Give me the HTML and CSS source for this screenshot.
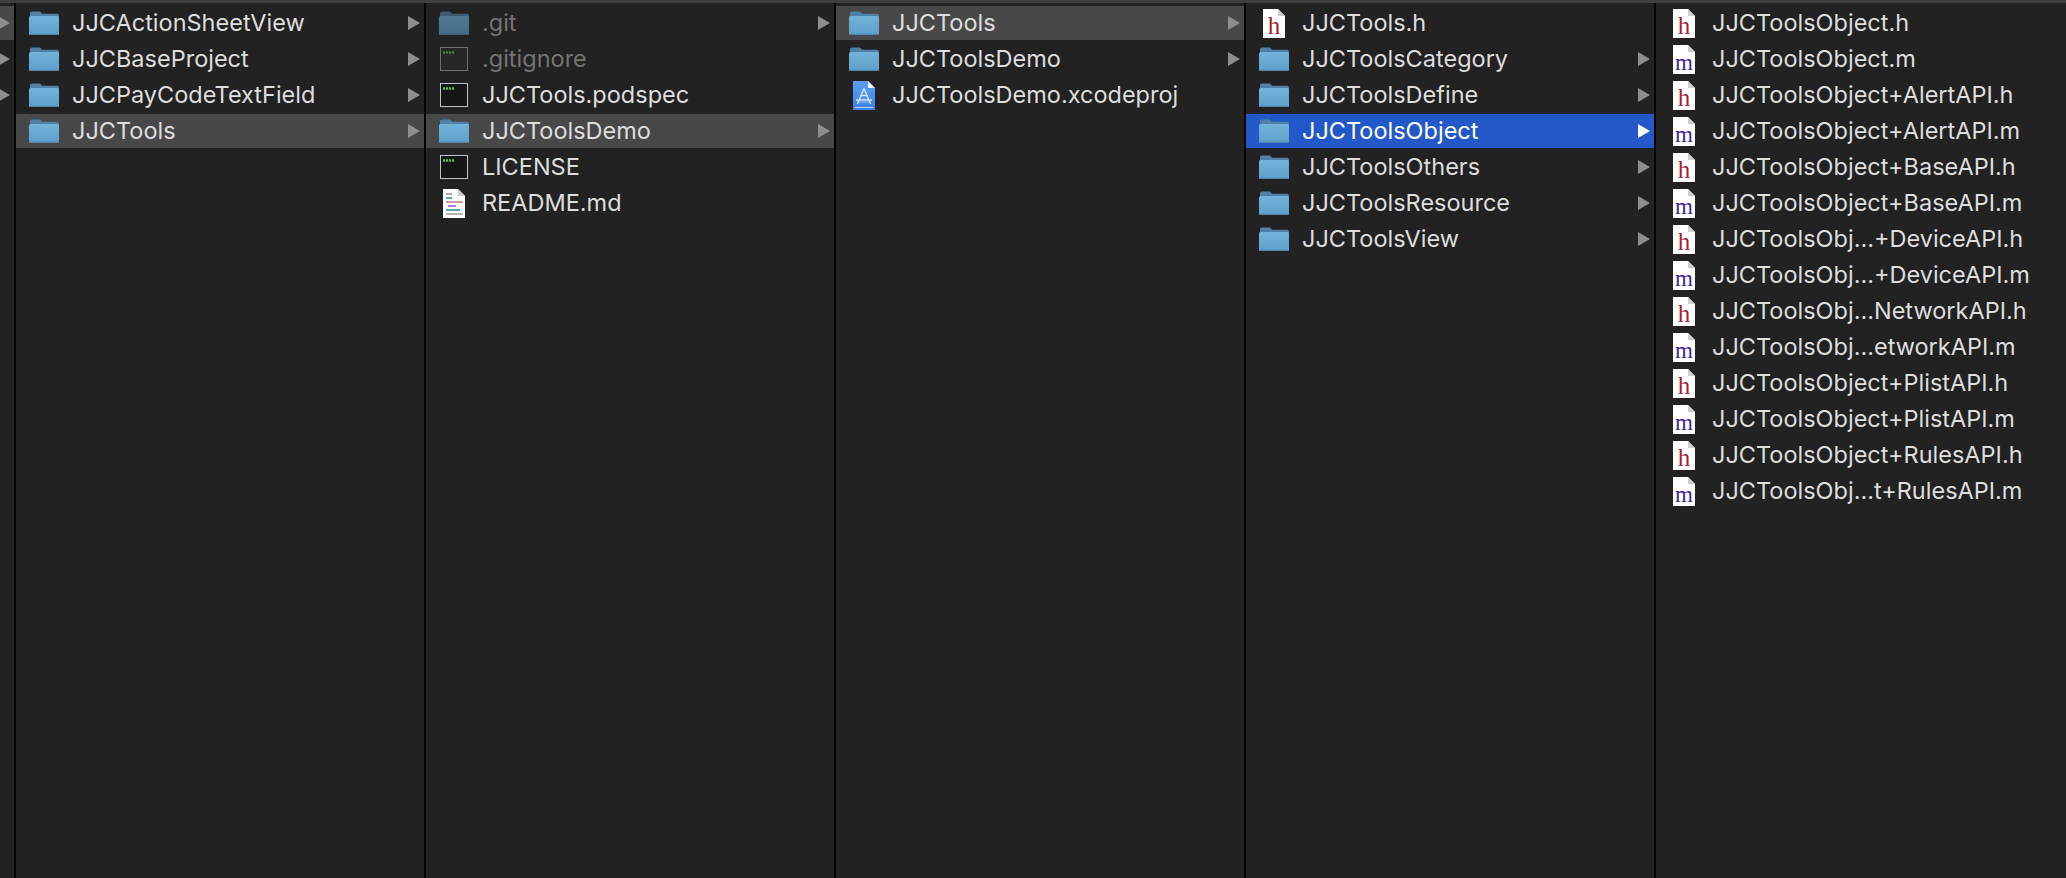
FILE: index.html
```html
<!DOCTYPE html>
<html lang="en">
<head>
  <meta charset="UTF-8" />
  <title>JJCTools</title>
  <link rel="stylesheet" href="styles.css">
</head>
<body>

  <svg class="sprites" width="0" height="0">
    <defs>
      <linearGradient id="folderFront" x1="0" y1="0" x2="0" y2="1">
        <stop offset="0" stop-color="#72b3db"/>
        <stop offset="1" stop-color="#5fa0cb"/>
      </linearGradient>
      <linearGradient id="xcodeBlue" x1="0" y1="0" x2="0" y2="1">
        <stop offset="0" stop-color="#5c9ff0"/>
        <stop offset="1" stop-color="#3f80e2"/>
      </linearGradient>
      <symbol id="folder" viewBox="0 0 30 24">
        <path d="M1 9V2.500C1 1.200 1.700.5 3 .5h7c.9 0 1.400.3 2 1l1 1.300h15c1.200 0 2 .8 2 2V10z" fill="#4f81a7"/>
        <rect x="0" y="5" width="30" height="19" rx="1.500" fill="url(#folderFront)"/>
        <rect x="0" y="22.800" width="30" height="1.200" rx=".6" fill="#4f86ad"/>
      </symbol>
      <symbol id="term" viewBox="0 0 28 24">
        <rect x=".5" y=".5" width="27" height="23" fill="#161616" stroke="#b9c3c8"/>
        <path d="M3 5.500h11" stroke="#5cc060" stroke-width="2.500" stroke-dasharray="2 1"/>
      </symbol>
      <symbol id="termdim" viewBox="0 0 28 24">
        <rect x=".5" y=".5" width="27" height="23" fill="#272727" stroke="#6d7172"/>
        <path d="M3 5.500h11" stroke="#47804a" stroke-width="2.500" stroke-dasharray="2 1"/>
      </symbol>
      <symbol id="readme" viewBox="0 0 22 29">
        <path d="M0 0h15l7 7v22H0z" fill="#fff"/>
        <path d="M15 0l7 7h-7z" fill="#c9c9c9"/>
        <path d="M3 5h6" stroke="#a9a9a9" stroke-width="2"/>
        <path d="M3 9h6" stroke="#58a9b5" stroke-width="2"/>
        <path d="M3 13h17" stroke="#cf9aa0" stroke-width="2"/>
        <path d="M5 17h8" stroke="#a07fe8" stroke-width="2"/>
        <path d="M3 21h14" stroke="#58a9b5" stroke-width="2"/>
        <path d="M3 25h17" stroke="#b4b4b4" stroke-width="2"/>
      </symbol>
      <symbol id="xcode" viewBox="0 0 22 29">
        <path d="M0 0h15l7 7v22H0z" fill="url(#xcodeBlue)"/>
        <path d="M15 0l7 7h-7z" fill="#f0f5fc"/>
        <path d="M2 26.500h18" stroke="#b7d3f8" stroke-width="1"/>
        <path d="M11 7.500L4.500 23M11 7.500L17.500 23M3 19h16M7 14.500h8" stroke="#d3e4fb" stroke-width="1.400" fill="none"/>
        <path d="M4 21h14" stroke="#8fbaf3" stroke-width="1"/>
      </symbol>
      <symbol id="hfile" viewBox="0 0 22 29">
        <path d="M0 0h15l7 7v22H0z" fill="#fff"/>
        <path d="M15 0l7 7h-7z" fill="#d0d0d0"/>
        <text x="11" y="25" class="letter letter-h">h</text>
      </symbol>
      <symbol id="mfile" viewBox="0 0 22 29">
        <path d="M0 0h15l7 7v22H0z" fill="#fff"/>
        <path d="M15 0l7 7h-7z" fill="#d0d0d0"/>
        <text x="11" y="25" class="letter letter-m">m</text>
      </symbol>
    </defs>
  </svg>

  <div class="browser">

    <div class="column column-sliver">
      <div class="row row-gray"><i class="arrow"></i></div>
      <div class="row"><i class="arrow"></i></div>
      <div class="row"><i class="arrow"></i></div>
    </div>

    <div class="column">
      <div class="row"><svg class="icon folder"><use href="#folder"/></svg><span class="name">JJCActionSheetView</span><i class="arrow"></i></div>
      <div class="row"><svg class="icon folder"><use href="#folder"/></svg><span class="name">JJCBaseProject</span><i class="arrow"></i></div>
      <div class="row"><svg class="icon folder"><use href="#folder"/></svg><span class="name">JJCPayCodeTextField</span><i class="arrow"></i></div>
      <div class="row row-gray"><svg class="icon folder"><use href="#folder"/></svg><span class="name">JJCTools</span><i class="arrow"></i></div>
    </div>

    <div class="column">
      <div class="row row-hidden"><svg class="icon folder"><use href="#folder"/></svg><span class="name">.git</span><i class="arrow"></i></div>
      <div class="row row-hidden"><svg class="icon term"><use href="#termdim"/></svg><span class="name">.gitignore</span></div>
      <div class="row"><svg class="icon term"><use href="#term"/></svg><span class="name">JJCTools.podspec</span></div>
      <div class="row row-gray"><svg class="icon folder"><use href="#folder"/></svg><span class="name">JJCToolsDemo</span><i class="arrow"></i></div>
      <div class="row"><svg class="icon term"><use href="#term"/></svg><span class="name">LICENSE</span></div>
      <div class="row"><svg class="icon doc"><use href="#readme"/></svg><span class="name">README.md</span></div>
    </div>

    <div class="column">
      <div class="row row-gray"><svg class="icon folder"><use href="#folder"/></svg><span class="name">JJCTools</span><i class="arrow"></i></div>
      <div class="row"><svg class="icon folder"><use href="#folder"/></svg><span class="name">JJCToolsDemo</span><i class="arrow"></i></div>
      <div class="row"><svg class="icon doc"><use href="#xcode"/></svg><span class="name">JJCToolsDemo.xcodeproj</span></div>
    </div>

    <div class="column">
      <div class="row"><svg class="icon doc"><use href="#hfile"/></svg><span class="name">JJCTools.h</span></div>
      <div class="row"><svg class="icon folder"><use href="#folder"/></svg><span class="name">JJCToolsCategory</span><i class="arrow"></i></div>
      <div class="row"><svg class="icon folder"><use href="#folder"/></svg><span class="name">JJCToolsDefine</span><i class="arrow"></i></div>
      <div class="row row-blue"><svg class="icon folder"><use href="#folder"/></svg><span class="name">JJCToolsObject</span><i class="arrow"></i></div>
      <div class="row"><svg class="icon folder"><use href="#folder"/></svg><span class="name">JJCToolsOthers</span><i class="arrow"></i></div>
      <div class="row"><svg class="icon folder"><use href="#folder"/></svg><span class="name">JJCToolsResource</span><i class="arrow"></i></div>
      <div class="row"><svg class="icon folder"><use href="#folder"/></svg><span class="name">JJCToolsView</span><i class="arrow"></i></div>
    </div>

    <div class="column">
      <div class="row"><svg class="icon doc"><use href="#hfile"/></svg><span class="name">JJCToolsObject.h</span></div>
      <div class="row"><svg class="icon doc"><use href="#mfile"/></svg><span class="name">JJCToolsObject.m</span></div>
      <div class="row"><svg class="icon doc"><use href="#hfile"/></svg><span class="name">JJCToolsObject+AlertAPI.h</span></div>
      <div class="row"><svg class="icon doc"><use href="#mfile"/></svg><span class="name">JJCToolsObject+AlertAPI.m</span></div>
      <div class="row"><svg class="icon doc"><use href="#hfile"/></svg><span class="name">JJCToolsObject+BaseAPI.h</span></div>
      <div class="row"><svg class="icon doc"><use href="#mfile"/></svg><span class="name">JJCToolsObject+BaseAPI.m</span></div>
      <div class="row"><svg class="icon doc"><use href="#hfile"/></svg><span class="name">JJCToolsObj...+DeviceAPI.h</span></div>
      <div class="row"><svg class="icon doc"><use href="#mfile"/></svg><span class="name">JJCToolsObj...+DeviceAPI.m</span></div>
      <div class="row"><svg class="icon doc"><use href="#hfile"/></svg><span class="name">JJCToolsObj...NetworkAPI.h</span></div>
      <div class="row"><svg class="icon doc"><use href="#mfile"/></svg><span class="name">JJCToolsObj...etworkAPI.m</span></div>
      <div class="row"><svg class="icon doc"><use href="#hfile"/></svg><span class="name">JJCToolsObject+PlistAPI.h</span></div>
      <div class="row"><svg class="icon doc"><use href="#mfile"/></svg><span class="name">JJCToolsObject+PlistAPI.m</span></div>
      <div class="row"><svg class="icon doc"><use href="#hfile"/></svg><span class="name">JJCToolsObject+RulesAPI.h</span></div>
      <div class="row"><svg class="icon doc"><use href="#mfile"/></svg><span class="name">JJCToolsObj...t+RulesAPI.m</span></div>
    </div>

  </div>

</body>
</html>
```

FILE: styles.css
```css
html, body {
  margin: 0;
  height: 100%;
  overflow: hidden;
}

body {
  background-color: #3e3e3e;
  padding-top: 3px;
  box-sizing: border-box;
  font-family: Inter, "Noto Sans", sans-serif;
  color: #dedede;
}

.sprites {
  display: block;
  height: 0;
}

.browser {
  display: grid;
  grid-template-columns: 14px repeat(4, 408px) 1fr;
  gap: 2px;
  height: 100%;
  background-color: #000;
}

.column {
  display: flex;
  flex-direction: column;
  gap: 2px;
  padding-top: 3px;
  background-color: #222;
  overflow: hidden;
  min-width: 0;
}

.row {
  display: flex;
  align-items: center;
  flex: 0 0 34px;
  height: 34px;
  padding-right: 4px;
}

.row-gray {
  background-color: #484848;
}

.row-blue {
  background-color: #2358c9;
  color: #fff;
}

.row-blue .arrow {
  border-left-color: #fff;
}

.row-hidden {
  color: #747474;
}

.row-hidden .folder {
  opacity: 0.6;
}

.icon {
  flex: none;
}

.folder {
  width: 30px;
  height: 24px;
  margin-left: 13px;
  margin-right: 13px;
}

.term {
  width: 28px;
  height: 24px;
  margin-left: 14px;
  margin-right: 14px;
}

.doc {
  width: 22px;
  height: 29px;
  margin-left: 17px;
  margin-right: 17px;
}

.name {
  flex: 1;
  padding-bottom: 1px;
  font-size: 23.5px;
  white-space: nowrap;
}

.arrow {
  flex: none;
  width: 0;
  height: 0;
  border-left: 12px solid #8e8e8e;
  border-top: 7px solid transparent;
  border-bottom: 7px solid transparent;
}

.column-sliver .row {
  justify-content: flex-end;
  padding-right: 4px;
}

.letter {
  font-family: "Liberation Serif", serif;
  text-anchor: middle;
}

.letter-h {
  font-size: 25px;
  fill: #a51f32;
}

.letter-m {
  font-size: 23px;
  fill: #43259c;
}
```
